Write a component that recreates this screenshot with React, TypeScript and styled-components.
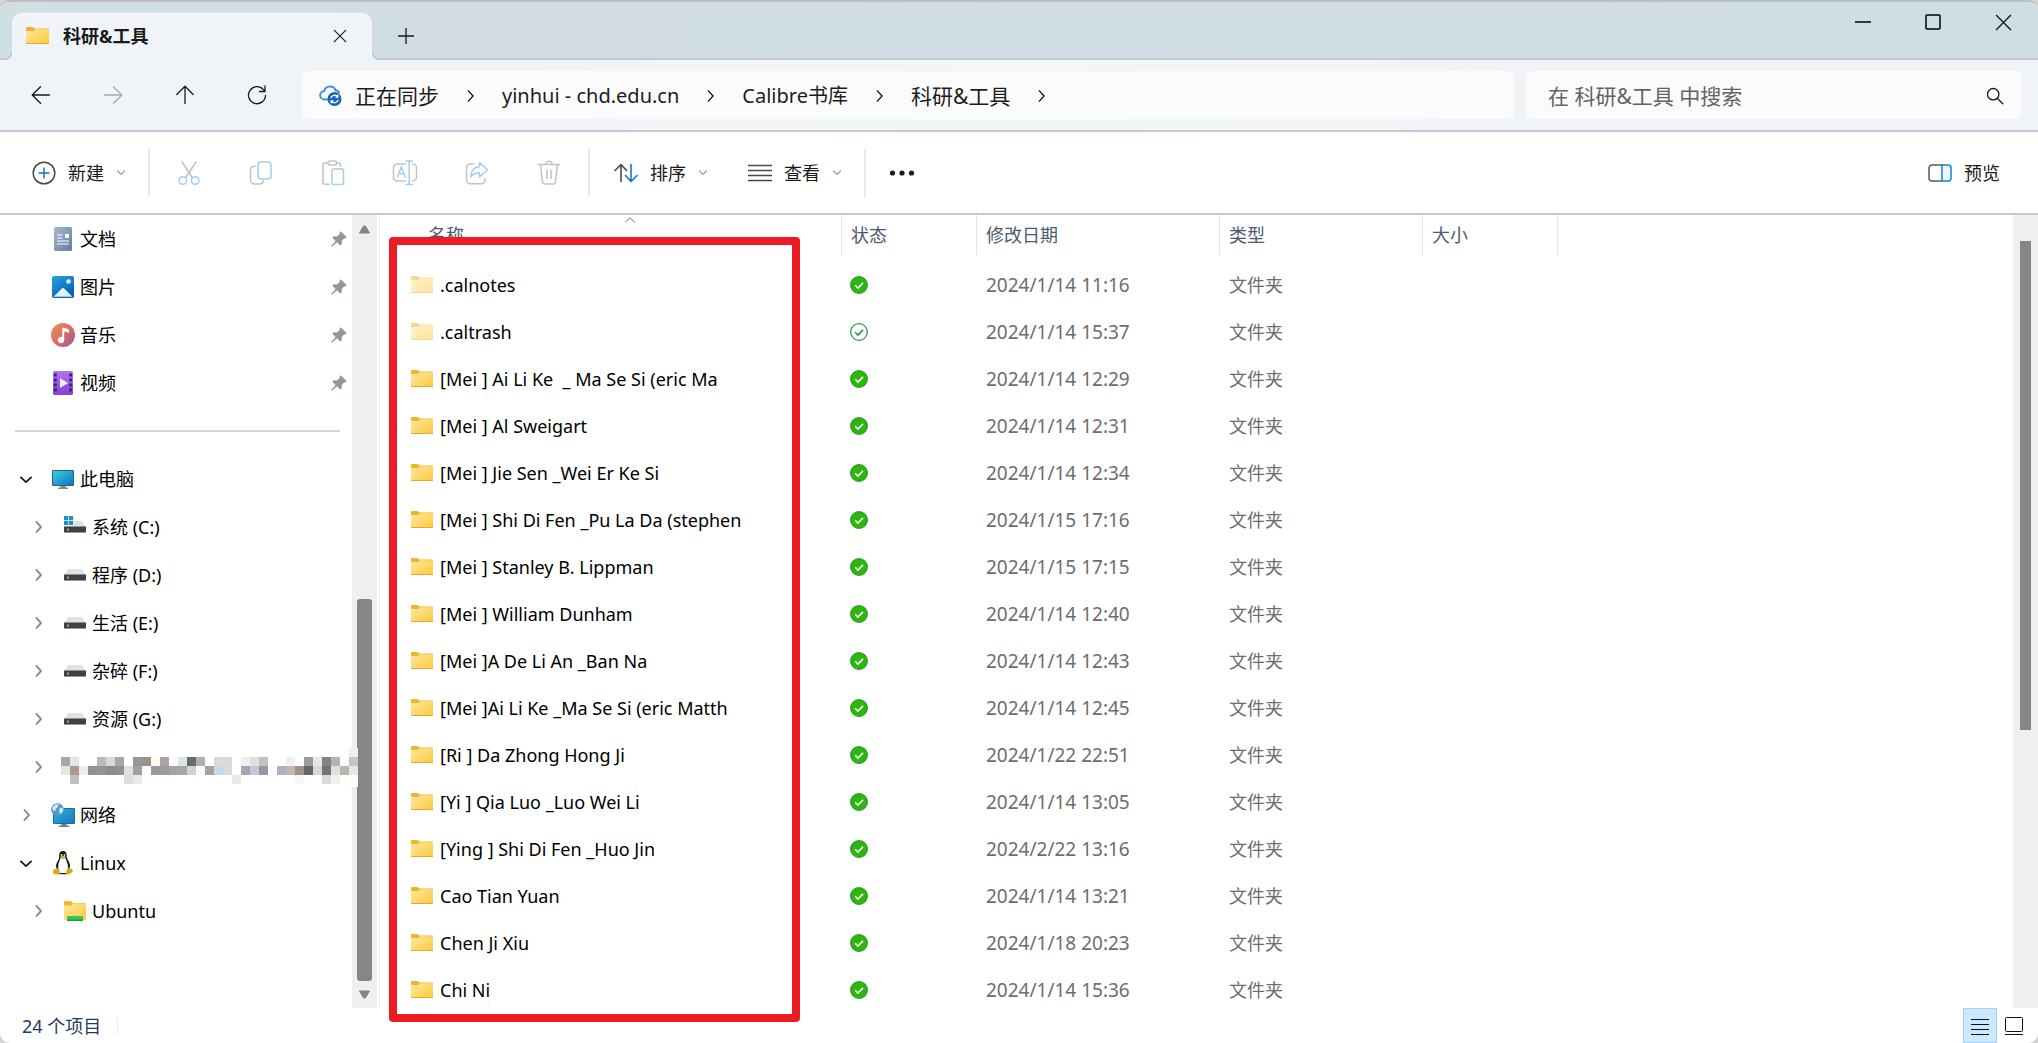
import React from 'react';
import styled, { createGlobalStyle, css } from 'styled-components';

const fontStack = '"Noto Sans", "Open Sans", "Noto Sans CJK SC", sans-serif';
const line = '#c3cad0';

const GlobalStyle = createGlobalStyle`
  *, *::before, *::after { box-sizing: border-box; }
  html, body { margin: 0; padding: 0; background: #d4d4d4; }
  body { font-family: ${fontStack}; font-size: 18px; line-height: 24px; color: #000; }
  button, input { font: inherit; color: inherit; }
  svg { display: block; flex: none; }
`;

const Window = styled.div`
  display: flex;
  flex-direction: column;
  height: 100vh;
  overflow: hidden;
  background: #fff;
  border-top: 2px solid #bebebe;
  border-radius: 10px;
`;

const PlainButton = styled.button`
  display: flex;
  align-items: center;
  justify-content: center;
  padding: 0;
  border: 0;
  background: none;
  white-space: nowrap;
`;

/* ---------- title bar ---------- */

const TitleBar = styled.header`
  display: flex;
  flex: none;
  height: 58px;
  padding-left: 12px;
  background: linear-gradient(90deg, #cfdfe2 0%, #d1dce5 22%, #d0dde4 70%, #cfdee2 90%);
  box-shadow: inset 0 -2px 0 ${line};
`;

const Tab = styled.div`
  position: relative;
  display: flex;
  align-items: center;
  align-self: flex-end;
  width: 360px;
  height: 47px;
  padding: 0 20px 2px 14px;
  background: #f0f4f9;
  border-radius: 10px 10px 0 0;
  box-shadow: 0 -1px 0 #dde6ea;

  &::before, &::after {
    content: '';
    position: absolute;
    bottom: 0;
    width: 8px;
    height: 8px;
  }
  &::before {
    left: -8px;
    background: radial-gradient(circle at 0 0, #cfdfe2 6px, ${line} 7px, ${line} 8px, #f0f4f9 9px);
  }
  &::after {
    right: -8px;
    background: radial-gradient(circle at 100% 0, #d0dee3 6px, ${line} 7px, ${line} 8px, #f0f4f9 9px);
  }
`;

const TabTitle = styled.span`
  flex: 1;
  margin-left: 14px;
  font-weight: 700;
  color: #1a1a1a;
`;

const TabButton = styled(PlainButton)`
  width: 24px;
  height: 32px;
`;

const NewTab = styled(PlainButton)`
  width: 68px;
  height: 68px;
`;

const WindowControls = styled.div`
  display: flex;
  margin-left: auto;
`;

const WindowButton = styled(PlainButton)`
  width: 70px;
  height: 40px;
`;

/* ---------- navigation bar ---------- */

const NavBar = styled.nav`
  display: flex;
  align-items: center;
  flex: none;
  height: 72px;
  padding: 0 16px 0 5px;
  background: linear-gradient(90deg, #f0f4f9 0%, #f0f4f9 25%, #f1f6f6 50%, #f0f4f9 75%);
  border-bottom: 2px solid ${line};
`;

const NavButton = styled(PlainButton)`
  width: 72px;
  height: 48px;
`;

const AddressBar = styled.div`
  display: flex;
  align-items: center;
  flex: 1195;
  height: 48px;
  margin-left: 9px;
  padding: 2px 0 0 17px;
  background: #fbfbfc;
  border-radius: 6px;
  color: #1c1c1c;
`;

const Crumb = styled.a<{ $size: number }>`
  font-size: ${(p) => p.$size}px;
  color: inherit;
  text-decoration: none;
  white-space: nowrap;
`;

const CrumbArrow = styled.span`
  padding: 0 28px;
`;

const StatusCloud = styled.span`
  margin-right: 12px;
`;

const SearchBox = styled.label`
  display: flex;
  align-items: center;
  flex: 456;
  height: 48px;
  margin-left: 12px;
  padding: 2px 18px 0 22px;
  background: #fbfbfc;
  border-radius: 6px;
`;

const SearchInput = styled.input`
  flex: 1;
  min-width: 0;
  padding: 0;
  border: 0;
  outline: 0;
  background: none;
  font-size: 21px;
  line-height: 30px;

  &::placeholder { color: #626364; opacity: 1; }
`;

/* ---------- command bar ---------- */

const CommandBar = styled.div`
  display: flex;
  align-items: center;
  flex: none;
  height: 83px;
  padding: 0 38px 0 32px;
  border-bottom: 2px solid ${line};
`;

const Command = styled(PlainButton)`
  gap: 12px;
  height: 48px;
  color: #1a1a1a;
`;

const IconCommand = styled(PlainButton)`
  width: 72px;
  height: 48px;
`;

const Divider = styled.span<{ $before: number; $after: number }>`
  width: 2px;
  height: 48px;
  margin: 0 ${(p) => p.$after}px 0 ${(p) => p.$before}px;
  background: #e9e9ea;
`;

const CommandGap = styled.span`
  width: 40px;
`;

const Push = styled.span`
  flex: 1;
`;

/* ---------- body ---------- */

const Body = styled.div`
  position: relative;
  display: flex;
  flex: 1;
  min-height: 0;
`;

const Sidebar = styled.aside`
  flex: none;
  width: 352px;
`;

const TreeList = styled.ul`
  margin: 0;
  padding: 0;
  list-style: none;
`;

const TreeRow = styled.li<{ $level: number }>`
  display: flex;
  align-items: center;
  height: 48px;
  padding-left: ${(p) => (p.$level ? 28 : 16)}px;
  padding-right: 5px;
`;

const TreeToggle = styled(PlainButton)`
  flex: none;
  width: 20px;
  height: 24px;
`;

const TreeIcon = styled.span`
  display: flex;
  justify-content: center;
  flex: none;
  width: 24px;
  margin: 0 5px 0 15px;
`;

const TreeLabel = styled.span`
  flex: 1;
  padding-bottom: 1px;
  white-space: nowrap;
`;

const TreeRule = styled.li`
  display: flex;
  align-items: center;
  height: 48px;
  padding: 0 12px 0 15px;

  &::before {
    content: '';
    flex: 1;
    height: 2px;
    background: #d3d4d5;
  }
`;

const Redacted = styled.span`
  position: relative;
  z-index: 1;
  width: 0;
  margin-left: 13px;
`;

const Scrollbar = styled.div`
  display: flex;
  flex-direction: column;
  align-items: center;
  flex: none;
  width: 25px;
  background: #efefef;
`;

const ScrollEnd = styled(PlainButton)<{ $size: number }>`
  width: 25px;
  height: ${(p) => p.$size}px;
`;

const ScrollSpace = styled.div<{ $grow: number }>`
  flex: ${(p) => p.$grow};
`;

const ScrollThumb = styled.div<{ $grow: number; $width: number; $radius: number }>`
  flex: ${(p) => p.$grow};
  width: ${(p) => p.$width}px;
  border-radius: ${(p) => p.$radius}px;
  background: #868686;
`;

const Splitter = styled.div`
  flex: none;
  width: 3px;
  border-right: 1px solid #f0f0f0;
`;

const Pane = styled.main`
  flex: 1;
  min-width: 0;
  overflow: hidden;
`;

const FileTable = styled.table`
  table-layout: fixed;
  width: 1178px;
  border-collapse: collapse;
`;

const HeadCell = styled.th`
  height: 46px;
  padding: 0;
  font-weight: 400;
  text-align: left;
  vertical-align: top;
  color: #4b5a72;
`;

const HeadInner = styled.div<{ $name?: boolean }>`
  position: relative;
  height: 40px;
  padding: 8px 0 0 ${(p) => (p.$name ? 48 : 9)}px;
  border-right: 1px solid #e4e4e4;
`;

const SortMark = styled.span`
  position: absolute;
  top: 2px;
  left: 38px;
  right: 0;
  display: flex;
  justify-content: center;
`;

const Cell = styled.td<{ $kind: 'name' | 'state' | 'date' | 'type' }>`
  height: 47px;
  padding: 0 0 0 9px;
  color: #6d6d6d;
  white-space: pre;
  ${(p) => p.$kind === 'name' && css`padding-left: 31px; color: #000;`}
  ${(p) => p.$kind === 'state' && css`padding-left: 8px;`}
  ${(p) => p.$kind === 'date' && css`font-size: 19px;`}
`;

const FileName = styled.div`
  display: flex;
  align-items: center;
  gap: 7px;
`;

const Highlight = styled.div`
  position: absolute;
  z-index: 2;
  top: 22px;
  left: 389px;
  width: 411px;
  bottom: -14px;
  border: 8px solid #ed1c24;
  border-radius: 4px;
  pointer-events: none;
`;

/* ---------- status bar ---------- */

const StatusBar = styled.footer`
  display: flex;
  align-items: center;
  flex: none;
  height: 35px;
  padding: 0 7px 0 22px;
  color: #1f3a5f;
`;

const StatusRule = styled.span`
  width: 1px;
  height: 18px;
  margin-left: 16px;
  background: #ececec;
`;

const ViewButton = styled(PlainButton)<{ $active?: boolean }>`
  width: 34px;
  height: 35px;
  ${(p) => p.$active && css`
    background: #cce8ff;
    border: 1px solid #a5d3f8;
  `}
`;

/* ---------- icons ---------- */

const Folder = ({ w = 22, h = 17, faded = false }: { w?: number; h?: number; faded?: boolean }) => (
  <svg width={w} height={h} viewBox="0 0 22 17" preserveAspectRatio="none" opacity={faded ? 0.5 : 1}>
    <defs>
      <linearGradient id="folderFace" x1="0" y1="0" x2="1" y2="1">
        <stop offset="0" stopColor="#ffe8a0" />
        <stop offset="1" stopColor="#fdc93c" />
      </linearGradient>
    </defs>
    <path d="M0 1a1 1 0 0 1 1-1h5.5L8.500 1.500H21.300a.7.7 0 0 1 .7.7V5H0z" fill="#efb526" />
    <path d="M0 4h7.500l1.200-1.700H22V16a1 1 0 0 1-1 1H1a1 1 0 0 1-1-1z" fill="url(#folderFace)" />
    <path d="M0 16.500h22" stroke="#e2aa2c" strokeWidth="1" />
  </svg>
);

const Chevron = ({ dir, size, color, weight = 1.5 }: { dir: 'right' | 'down' | 'up'; size: number; color: string; weight?: number }) => {
  const tall = dir === 'right';
  const d = { right: 'M1 1 6.500 7 1 13', down: 'M1 1 7 6.500 13 1', up: 'M1 6.500 7 1 13 6.500' }[dir];
  return (
    <svg width={tall ? size / 2 : size} height={tall ? size : size / 2} viewBox={tall ? '0 0 7.500 14' : '0 0 14 7.500'} fill="none" stroke={color} strokeWidth={(weight * 14) / size}>
      <path d={d} />
    </svg>
  );
};

const Cross = ({ size }: { size: number }) => (
  <svg width={size} height={size} viewBox="0 0 16 16" fill="none" stroke="#1a1a1a" strokeWidth="1.300">
    <path d="M1 1 15 15M15 1 1 15" />
  </svg>
);

const Arrow = ({ turn = 0, color = '#1a1a1a' }: { turn?: number; color?: string }) => (
  <svg width="20" height="20" viewBox="0 0 20 20" fill="none" stroke={color} strokeWidth="1.300" strokeLinecap="round" strokeLinejoin="round">
    <g transform={`rotate(${turn} 10 10)`}>
      <path d="M1.500 10H18.500M9.500 1.800 1.200 10l8.300 8.200" />
    </g>
  </svg>
);

const Refresh = () => (
  <svg width="20" height="20" viewBox="0 0 20 20" fill="none" stroke="#1a1a1a" strokeWidth="1.300" strokeLinecap="round" strokeLinejoin="round">
    <path d="M18.500 10.500A8.500 8.500 0 1 1 16.400 4.600L18 6.200M18 1v5.500h-5.500" />
  </svg>
);

const CloudSync = () => (
  <svg width="24" height="22" viewBox="0 0 24 22" fill="none">
    <path d="M8 14.500H5.500a4.200 4.200 0 0 1-.3-8.400A6 6 0 0 1 16.600 5.300" stroke="#4d8fd6" strokeWidth="2" strokeLinecap="round" />
    <path d="M16.500 5.200c1.800.2 3 1 3.800 2.300" stroke="#4d8fd6" strokeWidth="2" strokeLinecap="round" />
    <circle cx="15.500" cy="14" r="7" fill="#1566b8" />
    <path d="M11.800 13.200a4 4 0 0 1 7-1.400M18.900 9.800v2.300h-2.300M19.200 14.800a4 4 0 0 1-7 1.400M12.100 18.200v-2.300h2.300" stroke="#fff" strokeWidth="1.300" />
  </svg>
);

const SearchGlass = () => (
  <svg width="18" height="18" viewBox="0 0 18 18" fill="none" stroke="#1a1a1a" strokeWidth="1.300" strokeLinecap="round">
    <circle cx="7.200" cy="7.200" r="5.700" />
    <path d="m11.500 11.500 5.300 5.300" />
  </svg>
);

const PlusCircle = () => (
  <svg width="24" height="24" viewBox="0 0 24 24" fill="none" strokeWidth="1.500">
    <circle cx="12" cy="12" r="10.800" stroke="#4a4a4a" />
    <path d="M12 7v10M7 12h10" stroke="#0a78d4" strokeLinecap="round" />
  </svg>
);

const grey = '#c2c2c2';
const blue = '#a3cdf0';

const Cut = () => (
  <svg width="24" height="26" viewBox="0 0 24 26" fill="none" strokeWidth="1.500" strokeLinecap="round">
    <path d="M5 2 15.500 18M19 2 8.500 18" stroke={grey} />
    <circle cx="5.800" cy="20.500" r="3.800" stroke={blue} />
    <circle cx="18.200" cy="20.500" r="3.800" stroke={blue} />
  </svg>
);

const Copy = () => (
  <svg width="24" height="26" viewBox="0 0 24 26" fill="none" strokeWidth="1.500" strokeLinecap="round">
    <path d="M6 6.500H4.500a3 3 0 0 0-3 3V20a4 4 0 0 0 4 4H11a3 3 0 0 0 3-3v-.5" stroke={grey} />
    <rect x="9" y="2" width="13" height="17" rx="3" stroke={blue} />
  </svg>
);

const Paste = () => (
  <svg width="24" height="26" viewBox="0 0 24 26" fill="none" strokeWidth="1.500">
    <path d="M8.500 24.200H4a2 2 0 0 1-2-2V5a2 2 0 0 1 2-2h3M15.500 3h2a2 2 0 0 1 2 2v2" stroke={grey} />
    <rect x="7" y="1" width="8.500" height="4" rx="2" stroke={grey} />
    <rect x="11" y="9" width="11.500" height="15.500" rx="1.500" stroke={blue} />
  </svg>
);

const Rename = () => (
  <svg width="26" height="26" viewBox="0 0 26 26" fill="none" strokeWidth="1.500" strokeLinecap="round">
    <path d="M13.500 4H5a3.500 3.500 0 0 0-3.500 3.500v10A3.500 3.500 0 0 0 5 21h8.500M20.500 4a4 4 0 0 1 4 4v9a4 4 0 0 1-4 4" stroke={grey} />
    <path d="m5.500 17 3.800-10 3.900 10M6.800 13.800h5M14 1h6.500M14 24.500h6.500M17.200 1v23.500" stroke={blue} />
  </svg>
);

const Share = () => (
  <svg width="24" height="26" viewBox="0 0 24 26" fill="none" strokeWidth="1.500" strokeLinejoin="round">
    <path d="M9.500 4H5a3.500 3.500 0 0 0-3.500 3.500v12.700A3.500 3.500 0 0 0 5 23.700h11.500a3.500 3.500 0 0 0 3.500-3.500V18" stroke={grey} />
    <path d="M14.500 2.500 22.500 9.700l-8 7.300v-4.200c-4 0-6.800 1.400-9 4.200.5-6 3.800-9.800 9-10.400z" stroke={blue} />
  </svg>
);

const Trash = () => (
  <svg width="24" height="26" viewBox="0 0 24 26" fill="none" stroke={grey} strokeWidth="1.500" strokeLinecap="round" strokeLinejoin="round">
    <path d="M1.500 4.500h21M9 4.200a3 3 0 0 1 6 0M3.500 4.500l2 17.500a2.200 2.200 0 0 0 2.200 2h8.600a2.200 2.200 0 0 0 2.200-2l2-17.500M10 10v8.500M14 10v8.500" />
  </svg>
);

const SortIcon = () => (
  <svg width="24" height="20" viewBox="0 0 24 20" fill="none" strokeWidth="1.600" strokeLinecap="round" strokeLinejoin="round">
    <path d="M7 18.500v-17M1 7.500l6-6 5.500 6" stroke="#4a4a4a" />
    <path d="M17 1.500v17M11.500 12.500l5.500 6 6-6" stroke="#0a78d4" />
  </svg>
);

const Lines = () => (
  <svg width="24" height="18" viewBox="0 0 24 18" stroke="#4a4a4a" strokeWidth="1.500">
    <path d="M0 1.500h24M0 6.500h24M0 11.500h24M0 16.500h24" />
  </svg>
);

const Dots = () => (
  <svg width="26" height="6" viewBox="0 0 26 6" fill="#1a1a1a">
    <circle cx="3.500" cy="3" r="2.600" />
    <circle cx="13" cy="3" r="2.600" />
    <circle cx="22.500" cy="3" r="2.600" />
  </svg>
);

const PreviewIcon = () => (
  <svg width="24" height="18" viewBox="0 0 24 18" fill="none" strokeWidth="1.500">
    <path d="M14 1H4a3 3 0 0 0-3 3v10a3 3 0 0 0 3 3h10" stroke="#5a5a5a" />
    <path d="M14 1h6a3 3 0 0 1 3 3v10a3 3 0 0 1-3 3h-6z" stroke="#0a84d8" fill="#eff8ff" />
  </svg>
);

const Triangle = ({ down = false }: { down?: boolean }) => (
  <svg width="11" height="9" viewBox="0 0 11 9" fill="#858585" stroke="#858585" strokeWidth="1" strokeLinejoin="round">
    <path d={down ? 'M.5 1h10l-3.800 6.500a1.400 1.400 0 0 1-2.400 0z' : 'M.5 8h10L6.700 1.500a1.400 1.400 0 0 0-2.400 0z'} />
  </svg>
);

const Pin = () => (
  <svg width="16" height="16" viewBox="0 0 16 16" fill="#8f989c">
    <path d="M9.700.3 15.700 6.200l-1.400 1.200-1-.2-2.600 2.700.1 3.300-1.500 1.300L5.900 11.300 1 15.700.2 15.600V15L4.600 10 1.300 6.800l1.200-1.500 3.500.1 2.800-2.700-.3-1z" />
  </svg>
);

const DocumentIcon = () => (
  <svg width="18" height="24" viewBox="0 0 18 24">
    <defs>
      <linearGradient id="docFace" x1="0" y1="0" x2="1" y2="1">
        <stop offset="0" stopColor="#a5b9d2" />
        <stop offset="1" stopColor="#647d9d" />
      </linearGradient>
    </defs>
    <rect width="18" height="24" rx="1.500" fill="url(#docFace)" />
    <path d="M3 8h5.500M3 11h5.500M3 14h12M3 17h12" stroke="#fff" strokeWidth="1.200" />
    <rect x="11" y="7" width="4" height="4" fill="#fff" />
  </svg>
);

const PictureIcon = () => (
  <svg width="22" height="22" viewBox="0 0 22 22">
    <defs>
      <linearGradient id="picFace" x1="0" y1="0" x2="0.600" y2="1">
        <stop offset="0" stopColor="#29a3e3" />
        <stop offset="1" stopColor="#0560ae" />
      </linearGradient>
      <linearGradient id="picHill" x1="0" y1="0" x2="0" y2="1">
        <stop offset="0" stopColor="#fff" />
        <stop offset="1" stopColor="#d3ebfa" />
      </linearGradient>
    </defs>
    <rect width="22" height="22" rx="1.800" fill="url(#picFace)" />
    <circle cx="16.500" cy="5.500" r="2.300" fill="#d8f0fc" />
    <path d="M1.500 20.800 10 12.400q1-.9 2 0l8.500 8.400z" fill="url(#picHill)" />
  </svg>
);

const MusicIcon = () => (
  <svg width="24" height="24" viewBox="0 0 24 24">
    <defs>
      <linearGradient id="musicFace" x1="0" y1="0" x2="1" y2="1">
        <stop offset="0" stopColor="#f0905f" />
        <stop offset="0.500" stopColor="#d9705f" />
        <stop offset="1" stopColor="#a0529c" />
      </linearGradient>
    </defs>
    <circle cx="12" cy="12" r="12" fill="url(#musicFace)" />
    <path d="M11.300 4.500 18 6.200v3.600l-4.800-1.200V17a3.200 3.200 0 1 1-1.900-2.900z" fill="#fff" />
  </svg>
);

const VideoIcon = () => (
  <svg width="20" height="24" viewBox="0 0 20 24">
    <defs>
      <linearGradient id="filmFace" x1="0" y1="0" x2="0" y2="1">
        <stop offset="0" stopColor="#b176ee" />
        <stop offset="1" stopColor="#8240d6" />
      </linearGradient>
    </defs>
    <rect width="20" height="24" rx="1.500" fill="url(#filmFace)" />
    <g fill="#43206f">
      {[2.5, 7.5, 12.5, 17.5].map((y) => (
        <React.Fragment key={y}>
          <rect x="1" y={y} width="2.800" height="3" />
          <rect x="16.200" y={y} width="2.800" height="3" />
        </React.Fragment>
      ))}
    </g>
    <path d="M7 7v10l8-5z" fill="#f4ebff" />
  </svg>
);

const ComputerIcon = () => (
  <svg width="22" height="19" viewBox="0 0 22 19">
    <defs>
      <linearGradient id="screenFace" x1="0" y1="0" x2="1" y2="1">
        <stop offset="0" stopColor="#35d0dc" />
        <stop offset="1" stopColor="#1272c8" />
      </linearGradient>
    </defs>
    <rect width="22" height="16" rx="1" fill="#31627c" />
    <rect x="1" y="1" width="20" height="14" fill="url(#screenFace)" />
    <path d="M8.500 16h5v1.500h2.500V19H6v-1.500h2.500z" fill="#7e8a92" />
  </svg>
);

const NetworkIcon = () => (
  <svg width="24" height="24" viewBox="0 0 24 24">
    <defs>
      <linearGradient id="netFace" x1="0" y1="0" x2="1" y2="1">
        <stop offset="0" stopColor="#2bb3dc" />
        <stop offset="1" stopColor="#1479c2" />
      </linearGradient>
    </defs>
    <rect x="2" y="5" width="22" height="16" rx="1" fill="#28678f" />
    <rect x="3" y="6" width="20" height="14" fill="url(#netFace)" />
    <path d="M10.500 21h5v1.500h2.500V24H8v-1.500h2.500z" fill="#6f7b82" />
    <circle cx="6.500" cy="6.500" r="6.300" fill="#4a9cc9" />
    <path d="M2 3.500C4 1 7 .8 8 1.800 6.500 3 7.500 4.500 5.500 5.200 4 5.800 5 8 3.500 8.200 1.500 7.500 1 5.500 2 3.500zM9 5c2-.6 3.200 0 3.400 1.200-.3 2.500-1.700 4-2.900 4.600C8 10 9 8.500 7.800 7.500z" fill="#cfeaf6" />
  </svg>
);

const Penguin = () => (
  <svg width="20" height="24" viewBox="0 0 20 24">
    <path d="M10 0c-2.800 0-4 2-3.800 4.500.2 3-.4 4-1.800 6.300C3 13 2.600 16 3.500 19h13c1-3 .5-6.500-1-9-1.300-2.200-1.900-3.200-1.800-5.500C13.800 1.800 12.600 0 10 0z" fill="#15171a" />
    <path d="M10 7.500c-1.300 0-2.200-.6-2.500-.4C7 9.500 5 12.500 5.200 16c.1 3.500 2 6 4.800 6s5-2.500 5-6c0-3.500-2-6.500-2.500-8.900-.3-.2-1.200.4-2.500.4z" fill="#fff" />
    <path d="M6.500 22h7v1.200h-7z" fill="#15171a" />
    <path d="M7.200 5.700C8.500 4.300 11.500 4.300 12.800 5.700c-.3 1.200-1.700 2-2.800 2s-2.500-.8-2.800-2z" fill="#e5b32a" />
    <circle cx="8.500" cy="3.900" r=".9" fill="#eee" />
    <circle cx="11.500" cy="3.900" r=".9" fill="#eee" />
    <path d="M3.500 16.500c1.500.3 3.300 3.500 3.700 5.200.2 1.500-1 2.200-2.500 1.900L.5 22.700c-.8-.6-.3-1.600-.3-2.700 0-1.400.6-1.500 1.600-1.700.8-.3.900-1.500 1.700-1.800zM16.500 16.500c-1.500.3-3 2.500-3.400 5-.1 1.500.8 2.500 2.400 2.100l3.900-2.300c.7-.6.5-1.600-.1-2.400-.9-.9-1.800-2.300-2.800-2.400z" fill="#d9a820" />
  </svg>
);

const DriveIcon = ({ system = false }: { system?: boolean }) => (
  <svg width="22" height="22" viewBox="0 0 22 22">
    <path d="M4.500 5h13L22 11H0z" fill="#dfe1e4" />
    <rect y="10.500" width="22" height="6.500" rx=".6" fill="#414141" />
    <path d="M0 16.500h22" stroke="#9a9a9a" strokeWidth="1" />
    <rect x="3" y="12.500" width="2" height="2" fill="#4fd860" />
    {system && (
      <>
        <rect width="9.800" height="9.800" fill="#fff" />
        <path d="M0 0h4.200v4.200H0zM4.900 0h4.200v4.200H4.900zM0 4.900h4.200v4.200H0zM4.900 4.900h4.200v4.200H4.900z" fill="#188fce" />
      </>
    )}
  </svg>
);

const UbuntuFolder = () => (
  <svg width="22" height="20" viewBox="0 0 22 20">
    <path d="M0 1a1 1 0 0 1 1-1h6l1.500 2H21a1 1 0 0 1 1 1v2H0z" fill="#f3b92c" />
    <path d="M0 4.500h7.500L9 2.500h13V18a1 1 0 0 1-1 1H0z" fill="url(#folderFace)" />
    <rect x="3" y="15" width="16" height="4.800" rx="1" fill="#2fc95a" />
    <rect x="3" y="18.500" width="16" height="1.500" fill="#1b9a3d" />
  </svg>
);

const StateIcon = ({ solid }: { solid: boolean }) => (
  <svg width="18" height="18" viewBox="0 0 18 18" fill="none">
    <circle cx="9" cy="9" r="8.300" fill={solid ? '#2db60c' : '#fff'} stroke={solid ? '#279c28' : '#36994a'} strokeWidth="1.300" />
    <path d="m5.200 9.300 2.700 2.700L13 6.900" stroke={solid ? '#fff' : '#2b9140'} strokeWidth="1.600" />
  </svg>
);

const mosaicRows: Record<number, string>[] = [
  { 0: '#a7a7a7', 1: '#e5e5e7', 4: '#bababa', 5: '#d9dad7', 6: '#a8a8ab', 8: '#96969b', 9: '#a09084', 10: '#fffaf0', 11: '#aca4a0', 13: '#dde3e8', 14: '#666c6c', 15: '#b5aeaa', 17: '#dfd8d4', 18: '#dfd8d4', 20: '#efeff0', 21: '#e2dfd8', 22: '#c6c0b8', 25: '#f0f0f3', 27: '#9e9a9a', 28: '#e8e5e5', 29: '#89827a', 30: '#adb5b8', 32: '#c4c4c6' },
  { 0: '#e5e5e5', 1: '#b3958f', 2: '#efecec', 3: '#929191', 4: '#929291', 5: '#8c8d93', 6: '#949090', 7: '#e0e2d2', 8: '#a0a19f', 9: '#fbfeff', 10: '#9a979e', 11: '#9e999a', 12: '#a7a3a1', 13: '#a9a5a3', 14: '#c8d5d4', 15: '#f5fbee', 16: '#a8a09c', 17: '#bfdcee', 18: '#dfd8d4', 20: '#a5a6b0', 21: '#c0c7e0', 22: '#9a96a0', 24: '#a9b4c1', 25: '#c4b6b0', 26: '#a09282', 27: '#6b6264', 28: '#d9d7d8', 29: '#757273', 30: '#dbe2e0', 31: '#b8b7a9', 32: '#e8e7e7' },
  { 1: '#c0c0c0', 7: '#dcdcdc', 8: '#e9e9e9', 19: '#e9e9e9', 26: '#f5f5fd', 29: '#dbdada', 30: '#f3f0ec' },
];

const Mosaic = () => (
  <svg width="297" height="39" viewBox="0 0 297 39" shapeRendering="crispEdges">
    <rect x="288" width="9" height="39" fill="#fdfdfd" />
    <rect x="288" width="9" height="9" fill="#efefef" />
    {mosaicRows.map((row, y) =>
      Object.entries(row).map(([x, fill]) => (
        <rect key={`${x}-${y}`} x={Number(x) * 9} y={9 + y * 9} width="9" height="9" fill={fill} />
      )),
    )}
  </svg>
);

/* ---------- data ---------- */

const pinned = [
  { label: '文档', icon: <DocumentIcon /> },
  { label: '图片', icon: <PictureIcon /> },
  { label: '音乐', icon: <MusicIcon /> },
  { label: '视频', icon: <VideoIcon /> },
];

type Node = { label?: string; icon?: React.ReactNode; level: number; open?: boolean };

const tree: Node[] = [
  { label: '此电脑', icon: <ComputerIcon />, level: 0, open: true },
  { label: '系统 (C:)', icon: <DriveIcon system />, level: 1 },
  { label: '程序 (D:)', icon: <DriveIcon />, level: 1 },
  { label: '生活 (E:)', icon: <DriveIcon />, level: 1 },
  { label: '杂碎 (F:)', icon: <DriveIcon />, level: 1 },
  { label: '资源 (G:)', icon: <DriveIcon />, level: 1 },
  { level: 1 },
  { label: '网络', icon: <NetworkIcon />, level: 0 },
  { label: 'Linux', icon: <Penguin />, level: 0, open: true },
  { label: 'Ubuntu', icon: <UbuntuFolder />, level: 1 },
];

const files: [string, string][] = [
  ['.calnotes', '2024/1/14 11:16'],
  ['.caltrash', '2024/1/14 15:37'],
  ['[Mei ] Ai Li Ke  _ Ma Se Si (eric Ma', '2024/1/14 12:29'],
  ['[Mei ] Al Sweigart', '2024/1/14 12:31'],
  ['[Mei ] Jie Sen _Wei Er Ke Si', '2024/1/14 12:34'],
  ['[Mei ] Shi Di Fen _Pu La Da (stephen', '2024/1/15 17:16'],
  ['[Mei ] Stanley B. Lippman', '2024/1/15 17:15'],
  ['[Mei ] William Dunham', '2024/1/14 12:40'],
  ['[Mei ]A De Li An _Ban Na', '2024/1/14 12:43'],
  ['[Mei ]Ai Li Ke _Ma Se Si (eric Matth', '2024/1/14 12:45'],
  ['[Ri ] Da Zhong Hong Ji', '2024/1/22 22:51'],
  ['[Yi ] Qia Luo _Luo Wei Li', '2024/1/14 13:05'],
  ['[Ying ] Shi Di Fen _Huo Jin', '2024/2/22 13:16'],
  ['Cao Tian Yuan', '2024/1/14 13:21'],
  ['Chen Ji Xiu', '2024/1/18 20:23'],
  ['Chi Ni', '2024/1/14 15:36'],
];

const crumbs = [
  { text: '正在同步', size: 21 },
  { text: 'yinhui - chd.edu.cn', size: 20 },
  { text: 'Calibre书库', size: 20 },
  { text: '科研&工具', size: 21 },
];

const columns = ['状态', '修改日期', '类型', '大小'];

export default function App() {
  return (
    <>
      <GlobalStyle />
      <Window>
        <TitleBar>
          <Tab>
            <Folder w={23} h={17} />
            <TabTitle>科研&amp;工具</TabTitle>
            <TabButton aria-label="关闭标签页"><Cross size={14} /></TabButton>
          </Tab>
          <NewTab aria-label="新标签页">
            <svg width="16" height="16" viewBox="0 0 16 16" stroke="#1a1a1a" strokeWidth="1.300"><path d="M8 0v16M0 8h16" /></svg>
          </NewTab>
          <WindowControls>
            <WindowButton aria-label="最小化">
              <svg width="16" height="2" viewBox="0 0 16 2"><path d="M0 1h16" stroke="#000" strokeWidth="1.300" /></svg>
            </WindowButton>
            <WindowButton aria-label="最大化">
              <svg width="16" height="16" viewBox="0 0 16 16"><rect x="1" y="1" width="14" height="14" rx="1" fill="none" stroke="#000" strokeWidth="1.500" /></svg>
            </WindowButton>
            <WindowButton aria-label="关闭"><Cross size={17} /></WindowButton>
          </WindowControls>
        </TitleBar>

        <NavBar>
          <NavButton aria-label="后退"><Arrow /></NavButton>
          <NavButton aria-label="前进"><Arrow turn={180} color="#a6a9ac" /></NavButton>
          <NavButton aria-label="向上"><Arrow turn={90} /></NavButton>
          <NavButton aria-label="刷新"><Refresh /></NavButton>
          <AddressBar>
            <StatusCloud><CloudSync /></StatusCloud>
            {crumbs.map((c) => (
              <React.Fragment key={c.text}>
                <Crumb href="#" $size={c.size}>{c.text}</Crumb>
                <CrumbArrow><Chevron dir="right" size={14} color="#1a1a1a" /></CrumbArrow>
              </React.Fragment>
            ))}
          </AddressBar>
          <SearchBox>
            <SearchInput type="text" aria-label="搜索" placeholder="在 科研&工具 中搜索" />
            <SearchGlass />
          </SearchBox>
        </NavBar>

        <CommandBar>
          <Command>
            <PlusCircle />
            <span>新建</span>
            <Chevron dir="down" size={10} color="#555" weight={1} />
          </Command>
          <Divider $before={22} $after={3} />
          <IconCommand aria-label="剪切"><Cut /></IconCommand>
          <IconCommand aria-label="复制"><Copy /></IconCommand>
          <IconCommand aria-label="粘贴"><Paste /></IconCommand>
          <IconCommand aria-label="重命名"><Rename /></IconCommand>
          <IconCommand aria-label="共享"><Share /></IconCommand>
          <IconCommand aria-label="删除"><Trash /></IconCommand>
          <Divider $before={3} $after={24} />
          <Command>
            <SortIcon />
            <span>排序</span>
            <Chevron dir="down" size={10} color="#555" weight={1} />
          </Command>
          <CommandGap />
          <Command>
            <Lines />
            <span>查看</span>
            <Chevron dir="down" size={10} color="#555" weight={1} />
          </Command>
          <Divider $before={22} $after={0} />
          <IconCommand aria-label="更多"><Dots /></IconCommand>
          <Push />
          <Command>
            <PreviewIcon />
            <span>预览</span>
          </Command>
        </CommandBar>

        <Body>
          <Sidebar>
            <TreeList>
              {pinned.map((p) => (
                <TreeRow key={p.label} $level={0}>
                  <TreeToggle as="span" />
                  <TreeIcon>{p.icon}</TreeIcon>
                  <TreeLabel>{p.label}</TreeLabel>
                  <Pin />
                </TreeRow>
              ))}
              <TreeRule />
              {tree.map((n, i) => (
                <TreeRow key={i} $level={n.level}>
                  <TreeToggle aria-label={n.open ? '折叠' : '展开'}>
                    {n.open ? <Chevron dir="down" size={14} color="#1a1a1a" weight={2} /> : <Chevron dir="right" size={14} color="#8a8a8a" weight={2} />}
                  </TreeToggle>
                  {n.label ? (
                    <>
                      <TreeIcon>{n.icon}</TreeIcon>
                      <TreeLabel>{n.label}</TreeLabel>
                    </>
                  ) : (
                    <Redacted><Mosaic /></Redacted>
                  )}
                </TreeRow>
              ))}
            </TreeList>
          </Sidebar>
          <Scrollbar>
            <ScrollEnd $size={28} aria-label="向上滚动"><Triangle /></ScrollEnd>
            <ScrollSpace $grow={356} />
            <ScrollThumb $grow={382} $width={15} $radius={3} />
            <ScrollEnd $size={27} aria-label="向下滚动"><Triangle down /></ScrollEnd>
          </Scrollbar>
          <Splitter />
          <Pane>
            <FileTable>
              <colgroup>
                <col width="462" />
                <col width="135" />
                <col width="243" />
                <col width="203" />
                <col width="135" />
              </colgroup>
              <thead>
                <tr>
                  <HeadCell>
                    <HeadInner $name>
                      <SortMark><Chevron dir="up" size={12} color="#666" weight={1} /></SortMark>
                      名称
                    </HeadInner>
                  </HeadCell>
                  {columns.map((c) => (
                    <HeadCell key={c}><HeadInner>{c}</HeadInner></HeadCell>
                  ))}
                </tr>
              </thead>
              <tbody>
                {files.map(([name, date]) => (
                  <tr key={name}>
                    <Cell $kind="name">
                      <FileName>
                        <Folder faded={name.startsWith('.')} />
                        <span>{name}</span>
                      </FileName>
                    </Cell>
                    <Cell $kind="state"><StateIcon solid={name !== '.caltrash'} /></Cell>
                    <Cell $kind="date">{date}</Cell>
                    <Cell $kind="type">文件夹</Cell>
                    <Cell $kind="type" />
                  </tr>
                ))}
              </tbody>
            </FileTable>
          </Pane>
          <Scrollbar>
            <ScrollEnd as="span" $size={26} />
            <ScrollThumb $grow={489} $width={11} $radius={0} />
            <ScrollSpace $grow={278} />
          </Scrollbar>
          <Highlight />
        </Body>

        <StatusBar>
          <span>24 个项目</span>
          <StatusRule />
          <Push />
          <ViewButton $active aria-label="详细信息">
            <svg width="18" height="18" viewBox="0 0 18 18" stroke="#111" strokeWidth="1"><path d="M0 2.500h18M0 7.500h18M0 12.500h18M0 17.500h18" /></svg>
          </ViewButton>
          <ViewButton aria-label="大图标">
            <svg width="18" height="18" viewBox="0 0 18 18" fill="none" stroke="#111" strokeWidth="1"><rect x=".5" y=".5" width="17" height="14" rx="1" /><path d="M0 17.500h18" /></svg>
          </ViewButton>
        </StatusBar>
      </Window>
    </>
  );
}
